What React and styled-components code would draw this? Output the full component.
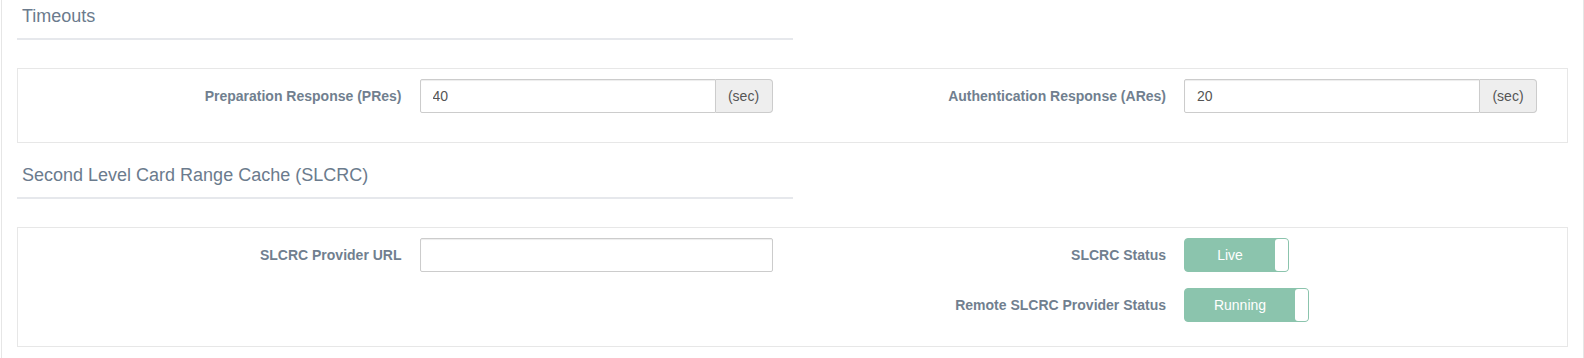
import styled, { createGlobalStyle } from "styled-components";

const GlobalStyle = createGlobalStyle`
  html, body {
    margin: 0;
    padding: 0;
    background: #fff;
  }
  body {
    font-family: "Liberation Sans", Arial, sans-serif;
  }
  * {
    box-sizing: border-box;
  }
`;

const Page = styled.div`
  margin-left: 1px;
  min-height: 358px;
  padding: 0 15px;
  border-left: 1px solid #e6e6e6;
  border-right: 1px solid #e6e6e6;
`;

const SectionTitle = styled.h4`
  width: 50%;
  margin: 0;
  padding: 6px 5px 12px;
  font-size: 18px;
  font-weight: 400;
  line-height: 20px;
  color: #6b7b8d;
  border-bottom: 2px solid #e6e8ec;
`;

const Panel = styled.div`
  display: grid;
  grid-template-columns: 1fr 1fr;
  margin: 28px 0 16px;
  padding: 10px 10px ${({ $bottom }) => $bottom}px;
  border: 1px solid #e7e7e7;
`;

const Column = styled.div`
  display: flex;
  flex-direction: column;
  gap: 16px;
`;

const Field = styled.div`
  display: grid;
  grid-template-columns: 1fr 353px;
  column-gap: 18px;
  align-items: center;
  padding-right: 20px;
`;

const Label = styled.label`
  text-align: right;
  font-size: 14px;
  font-weight: 700;
  color: #717f8f;
`;

const InputGroup = styled.div`
  display: flex;
  height: 34px;
`;

const Input = styled.input`
  flex: 1;
  min-width: 0;
  height: 34px;
  padding: 6px 12px;
  font-family: "Liberation Sans", Arial, sans-serif;
  font-size: 14px;
  color: #555;
  background: #fff;
  border: 1px solid #ccc;
  border-radius: ${({ $alone }) => ($alone ? "2px" : "2px 0 0 2px")};
  box-shadow: inset 0 1px 1px rgba(0, 0, 0, 0.075);
  outline: none;
`;

const Addon = styled.span`
  display: flex;
  align-items: center;
  justify-content: center;
  width: 57px;
  font-size: 14px;
  color: #555;
  background: #eee;
  border: 1px solid #ccc;
  border-left: 0;
  border-radius: 0 4px 4px 0;
`;

const Toggle = styled.div`
  display: flex;
  width: ${({ $width }) => $width}px;
  height: 34px;
  background: #8bc4ad;
  border: 1px solid #8bc4ad;
  border-radius: 4px;
`;

const ToggleText = styled.span`
  flex: 1;
  display: flex;
  align-items: center;
  justify-content: center;
  font-size: 14px;
  color: #fff;
`;

const Knob = styled.span`
  width: 13px;
  background: #fff;
  border-radius: 3px;
`;

const TimeField = ({ label, value }) => (
  <Field>
    <Label>{label}</Label>
    <InputGroup>
      <Input defaultValue={value} />
      <Addon>(sec)</Addon>
    </InputGroup>
  </Field>
);

const StatusField = ({ label, text, width }) => (
  <Field>
    <Label>{label}</Label>
    <Toggle $width={width}>
      <ToggleText>{text}</ToggleText>
      <Knob />
    </Toggle>
  </Field>
);

export default function App() {
  return (
    <>
      <GlobalStyle />
      <Page>
        <SectionTitle>Timeouts</SectionTitle>
        <Panel $bottom={29}>
          <Column>
            <TimeField label="Preparation Response (PRes)" value="40" />
          </Column>
          <Column>
            <TimeField label="Authentication Response (ARes)" value="20" />
          </Column>
        </Panel>

        <SectionTitle>Second Level Card Range Cache (SLCRC)</SectionTitle>
        <Panel $bottom={24}>
          <Column>
            <Field>
              <Label>SLCRC Provider URL</Label>
              <Input $alone />
            </Field>
          </Column>
          <Column>
            <StatusField label="SLCRC Status" text="Live" width={105} />
            <StatusField label="Remote SLCRC Provider Status" text="Running" width={125} />
          </Column>
        </Panel>
      </Page>
    </>
  );
}
